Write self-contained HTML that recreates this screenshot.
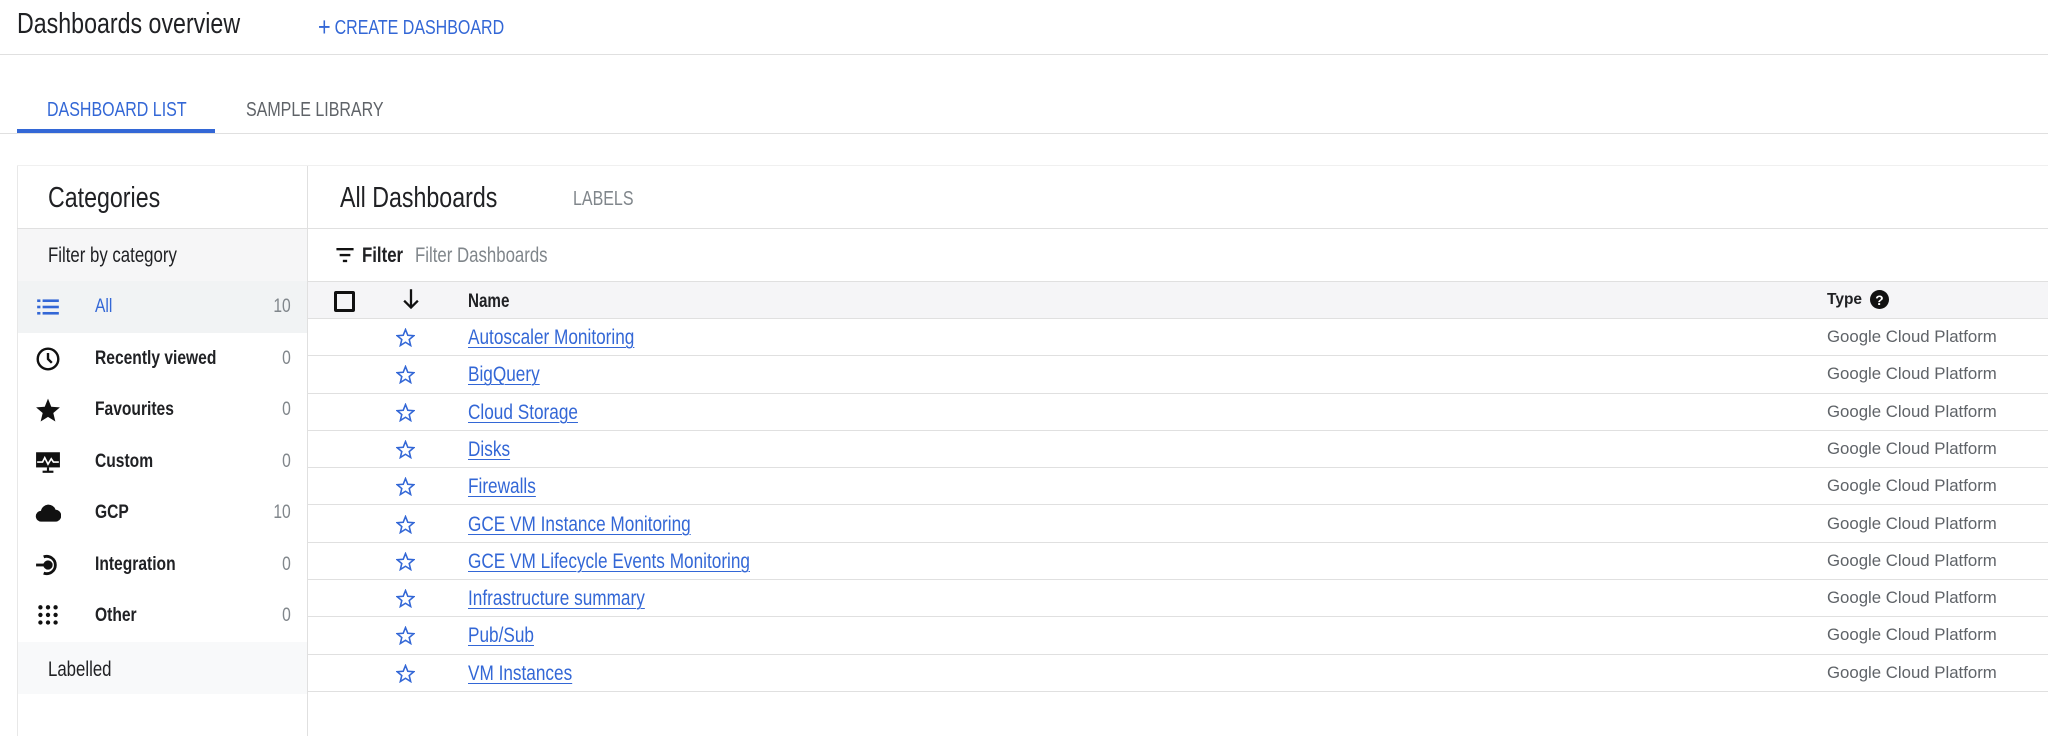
<!DOCTYPE html>
<html><head><meta charset="utf-8"><style>
*{margin:0;padding:0;box-sizing:border-box}
body{width:2048px;height:736px;overflow:hidden;background:#fff;font-family:"Liberation Sans",Arial,sans-serif;color:#202124;position:relative}
.a{position:absolute;white-space:nowrap;line-height:1}
.c{display:inline-block;transform:scaleX(.8);transform-origin:left center}
.hl{position:absolute;height:1px;background:#e0e0e0}
.cat{position:absolute;left:18px;width:289px;height:52px}
.cat .ic{position:absolute;left:17px;top:13px;width:26px;height:26px}
.cat .t{position:absolute;left:77px;top:16px;font-size:19.5px;font-weight:bold;color:#202124;line-height:1;white-space:nowrap}
.cat .n{position:absolute;right:16px;top:16px;font-size:19.5px;color:#80868b;line-height:1;transform:scaleX(.8);transform-origin:right center}
.row{position:absolute;left:307px;width:1741px;height:37.3px;border-bottom:1px solid #e0e0e0}
.row svg{position:absolute;left:89px;top:9px}
.row .nm{position:absolute;left:161px;top:8px;font-size:21.5px;color:#3367d6;line-height:1;white-space:nowrap}
.row .nm span{text-decoration:underline;text-underline-offset:3px;text-decoration-thickness:1px}
.row .ty{position:absolute;left:1520px;top:10px;font-size:16.8px;color:#5f6368;line-height:1;white-space:nowrap}
</style></head><body>
<div class="a" style="left:17px;top:10px;font-size:29px"><span class="c">Dashboards overview</span></div>
<div class="a" style="left:318px;top:12px;font-size:20px;color:#3367d6"><span class="c"><span style="font-size:27px;position:relative;top:2px;margin-right:5px">+</span>CREATE DASHBOARD</span></div>
<div class="hl" style="left:0;top:54px;width:2048px"></div>
<div class="a" style="left:47px;top:100px;font-size:20px;color:#3367d6"><span class="c">DASHBOARD LIST</span></div>
<div class="a" style="left:246px;top:100px;font-size:20px;color:#5f6368"><span class="c">SAMPLE LIBRARY</span></div>
<div class="hl" style="left:0;top:133px;width:2048px"></div>
<div style="position:absolute;left:17px;top:129px;width:198px;height:4px;background:#3367d6"></div>

<div style="position:absolute;left:17px;top:165px;width:1px;height:571px;background:#e8e8e8"></div>
<div style="position:absolute;left:307px;top:165px;width:1px;height:571px;background:#e0e0e0"></div>
<div class="hl" style="left:17px;top:165px;width:2031px;background:#f0f0f0"></div>
<div class="a" style="left:48px;top:184px;font-size:29px"><span class="c">Categories</span></div>
<div class="hl" style="left:17px;top:228px;width:2031px"></div>
<div style="position:absolute;left:18px;top:229px;width:289px;height:52px;background:#f6f6f7"></div>
<div class="a" style="left:48px;top:245px;font-size:21px"><span class="c">Filter by category</span></div>
<div class="cat" style="top:281px;background:#f1f3f4">
<svg class="ic" viewBox="0 0 24 24" fill="#3367d6"><rect x="2" y="5" width="3" height="2.4"/><rect x="7" y="5" width="15" height="2.4"/><rect x="2" y="10.8" width="3" height="2.4"/><rect x="7" y="10.8" width="15" height="2.4"/><rect x="2" y="16.6" width="3" height="2.4"/><rect x="7" y="16.6" width="15" height="2.4"/></svg>
<div class="t" style="color:#3367d6;font-weight:normal"><span class="c">All</span></div><div class="n">10</div></div>
<div class="cat" style="top:333px">
<svg class="ic" viewBox="0 0 24 24" fill="none" stroke="#111" stroke-width="2.2"><circle cx="12" cy="12" r="9.5"/><path d="M12 6.5V12l3.5 3.5"/></svg>
<div class="t"><span class="c">Recently viewed</span></div><div class="n">0</div></div>
<div class="cat" style="top:384px">
<svg class="ic" viewBox="0 0 24 24" fill="#111"><path d="M12 1.5l3 7.5 8 .6-6.1 5.2 1.9 7.8L12 18.4l-6.8 4.2 1.9-7.8L1 9.6l8-.6z"/></svg>
<div class="t"><span class="c">Favourites</span></div><div class="n">0</div></div>
<div class="cat" style="top:436px">
<svg class="ic" viewBox="0 0 24 24"><rect x="1" y="3" width="22" height="14" fill="#111"/><path d="M2 12h5l2-4 3 6 3-5 2 3h5" stroke="#fff" stroke-width="1.5" fill="none"/><rect x="11" y="17" width="2" height="4" fill="#111"/><rect x="7" y="20" width="10" height="2" fill="#111"/></svg>
<div class="t"><span class="c">Custom</span></div><div class="n">0</div></div>
<div class="cat" style="top:487px">
<svg class="ic" viewBox="0 0 24 24" fill="#111"><path d="M6 20a5 5 0 0 1-.5-10A7 7 0 0 1 19 9a5.5 5.5 0 0 1-.5 11z"/></svg>
<div class="t"><span class="c">GCP</span></div><div class="n">10</div></div>
<div class="cat" style="top:539px">
<svg class="ic" viewBox="0 0 24 24" fill="none" stroke="#111" stroke-width="2.6"><path d="M8 4.5A8 8 0 1 1 8 19.5"/><circle cx="12" cy="12" r="3" fill="#111"/><path d="M1 12h9"/></svg>
<div class="t"><span class="c">Integration</span></div><div class="n">0</div></div>
<div class="cat" style="top:590px">
<svg class="ic" viewBox="0 0 24 24" fill="#111"><circle cx="5" cy="4" r="2"/><circle cx="12" cy="4" r="2"/><circle cx="19" cy="4" r="2"/><circle cx="5" cy="11" r="2"/><circle cx="12" cy="11" r="2"/><circle cx="19" cy="11" r="2"/><circle cx="5" cy="18" r="2"/><circle cx="12" cy="18" r="2"/><circle cx="19" cy="18" r="2"/></svg>
<div class="t"><span class="c">Other</span></div><div class="n">0</div></div>
<div style="position:absolute;left:18px;top:642px;width:289px;height:52px;background:#f8f9fa"></div>
<div class="a" style="left:48px;top:659px;font-size:21px"><span class="c">Labelled</span></div>

<div class="a" style="left:340px;top:184px;font-size:29px"><span class="c">All Dashboards</span></div>
<div class="a" style="left:573px;top:189px;font-size:20px;color:#80868b"><span class="c">LABELS</span></div>
<svg class="a" style="left:336px;top:248px" width="18" height="15" viewBox="0 0 16 14" fill="#111"><rect x="0" y="0" width="16" height="2.2"/><rect x="3" y="5.5" width="10" height="2.2"/><rect x="6" y="11" width="4" height="2.2"/></svg>
<div class="a" style="left:362px;top:245px;font-size:21px;font-weight:bold"><span class="c">Filter</span></div>
<div class="a" style="left:415px;top:245px;font-size:21px;color:#80868b"><span class="c">Filter Dashboards</span></div>
<div class="hl" style="left:307px;top:281px;width:1741px"></div>
<div style="position:absolute;left:308px;top:282px;width:1740px;height:37px;background:#f5f5f7;border-bottom:1px solid #e0e0e0"></div>
<div style="position:absolute;left:334px;top:291px;width:21px;height:21px;border:3px solid #111;border-radius:2px"></div>
<svg class="a" style="left:403px;top:289px" width="16" height="21" viewBox="0 0 14 18" fill="none" stroke="#111" stroke-width="2"><path d="M7 0v16M1 10l6 6 6-6"/></svg>
<div class="a" style="left:468px;top:292px;font-size:19px;font-weight:bold"><span class="c">Name</span></div>
<div class="a" style="left:1827px;top:292px;font-size:15.5px;font-weight:bold">Type</div>
<svg class="a" style="left:1870px;top:290px" width="19" height="19" viewBox="0 0 18 18"><circle cx="9" cy="9" r="9" fill="#111"/><text x="9" y="14" font-size="13" font-weight="bold" fill="#fff" text-anchor="middle" font-family="Liberation Sans">?</text></svg>

<div class="row" style="top:319px"><svg width="19" height="19" viewBox="0 0 24 24" fill="none" stroke="#3367d6" stroke-width="2"><path d="M12 2l2.9 7.2 7.6.5-5.8 4.9 1.8 7.5L12 18l-6.5 4.1 1.8-7.5L1.5 9.7l7.6-.5z"/></svg><div class="nm"><span class="c">Autoscaler Monitoring</span></div><div class="ty">Google Cloud Platform</div></div>
<div class="row" style="top:356.3px"><svg width="19" height="19" viewBox="0 0 24 24" fill="none" stroke="#3367d6" stroke-width="2"><path d="M12 2l2.9 7.2 7.6.5-5.8 4.9 1.8 7.5L12 18l-6.5 4.1 1.8-7.5L1.5 9.7l7.6-.5z"/></svg><div class="nm"><span class="c">BigQuery</span></div><div class="ty">Google Cloud Platform</div></div>
<div class="row" style="top:393.6px"><svg width="19" height="19" viewBox="0 0 24 24" fill="none" stroke="#3367d6" stroke-width="2"><path d="M12 2l2.9 7.2 7.6.5-5.8 4.9 1.8 7.5L12 18l-6.5 4.1 1.8-7.5L1.5 9.7l7.6-.5z"/></svg><div class="nm"><span class="c">Cloud Storage</span></div><div class="ty">Google Cloud Platform</div></div>
<div class="row" style="top:430.9px"><svg width="19" height="19" viewBox="0 0 24 24" fill="none" stroke="#3367d6" stroke-width="2"><path d="M12 2l2.9 7.2 7.6.5-5.8 4.9 1.8 7.5L12 18l-6.5 4.1 1.8-7.5L1.5 9.7l7.6-.5z"/></svg><div class="nm"><span class="c">Disks</span></div><div class="ty">Google Cloud Platform</div></div>
<div class="row" style="top:468.2px"><svg width="19" height="19" viewBox="0 0 24 24" fill="none" stroke="#3367d6" stroke-width="2"><path d="M12 2l2.9 7.2 7.6.5-5.8 4.9 1.8 7.5L12 18l-6.5 4.1 1.8-7.5L1.5 9.7l7.6-.5z"/></svg><div class="nm"><span class="c">Firewalls</span></div><div class="ty">Google Cloud Platform</div></div>
<div class="row" style="top:505.5px"><svg width="19" height="19" viewBox="0 0 24 24" fill="none" stroke="#3367d6" stroke-width="2"><path d="M12 2l2.9 7.2 7.6.5-5.8 4.9 1.8 7.5L12 18l-6.5 4.1 1.8-7.5L1.5 9.7l7.6-.5z"/></svg><div class="nm"><span class="c">GCE VM Instance Monitoring</span></div><div class="ty">Google Cloud Platform</div></div>
<div class="row" style="top:542.8px"><svg width="19" height="19" viewBox="0 0 24 24" fill="none" stroke="#3367d6" stroke-width="2"><path d="M12 2l2.9 7.2 7.6.5-5.8 4.9 1.8 7.5L12 18l-6.5 4.1 1.8-7.5L1.5 9.7l7.6-.5z"/></svg><div class="nm"><span class="c">GCE VM Lifecycle Events Monitoring</span></div><div class="ty">Google Cloud Platform</div></div>
<div class="row" style="top:580.1px"><svg width="19" height="19" viewBox="0 0 24 24" fill="none" stroke="#3367d6" stroke-width="2"><path d="M12 2l2.9 7.2 7.6.5-5.8 4.9 1.8 7.5L12 18l-6.5 4.1 1.8-7.5L1.5 9.7l7.6-.5z"/></svg><div class="nm"><span class="c">Infrastructure summary</span></div><div class="ty">Google Cloud Platform</div></div>
<div class="row" style="top:617.4px"><svg width="19" height="19" viewBox="0 0 24 24" fill="none" stroke="#3367d6" stroke-width="2"><path d="M12 2l2.9 7.2 7.6.5-5.8 4.9 1.8 7.5L12 18l-6.5 4.1 1.8-7.5L1.5 9.7l7.6-.5z"/></svg><div class="nm"><span class="c">Pub/Sub</span></div><div class="ty">Google Cloud Platform</div></div>
<div class="row" style="top:654.7px"><svg width="19" height="19" viewBox="0 0 24 24" fill="none" stroke="#3367d6" stroke-width="2"><path d="M12 2l2.9 7.2 7.6.5-5.8 4.9 1.8 7.5L12 18l-6.5 4.1 1.8-7.5L1.5 9.7l7.6-.5z"/></svg><div class="nm"><span class="c">VM Instances</span></div><div class="ty">Google Cloud Platform</div></div>
</body></html>
